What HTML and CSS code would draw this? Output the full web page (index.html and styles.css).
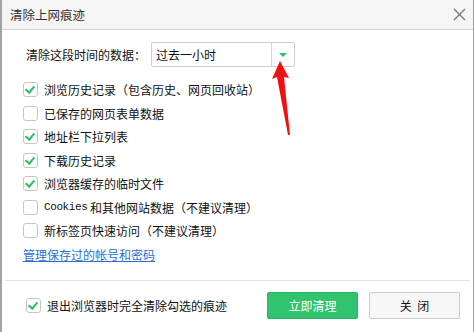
FILE: index.html
```html
<!DOCTYPE html>
<html lang="zh-CN">
<head>
    <meta charset="UTF-8">
    <title>清除上网痕迹</title>
    <link rel="stylesheet" href="styles.css">
</head>
<body>
    <div class="dialog">
        <div class="title-bar">
            <span class="title">清除上网痕迹</span>
            <span class="close-btn">
                <svg width="13" height="13" viewBox="0 0 13 13">
                    <path d="M1 1 L12 12 M12 1 L1 12" stroke="#777" stroke-width="1.3" fill="none"/>
                </svg>
            </span>
        </div>

        <div class="content">
            <div class="time-row">
                <span class="time-label">清除这段时间的数据：</span>
                <div class="select">
                    <span class="select-value">过去一小时</span>
                    <span class="select-arrow"><i class="triangle"></i></span>
                </div>
            </div>

            <ul class="options">
                <li class="option"><span class="checkbox checked"></span>浏览历史记录（包含历史、网页回收站）</li>
                <li class="option"><span class="checkbox"></span>已保存的网页表单数据</li>
                <li class="option"><span class="checkbox checked"></span>地址栏下拉列表</li>
                <li class="option"><span class="checkbox checked"></span>下载历史记录</li>
                <li class="option"><span class="checkbox checked"></span>浏览器缓存的临时文件</li>
                <li class="option"><span class="checkbox"></span><span class="latin">Cookies</span>&nbsp;和其他网站数据（不建议清理）</li>
                <li class="option"><span class="checkbox"></span>新标签页快速访问（不建议清理）</li>
            </ul>

            <a class="manage-link" href="#">管理保存过的帐号和密码</a>
        </div>

        <div class="footer">
            <label class="exit-option"><span class="checkbox checked"></span>退出浏览器时完全清除勾选的痕迹</label>
            <div class="buttons">
                <button class="btn btn-primary">立即清理</button>
                <button class="btn btn-default">关&nbsp;&nbsp;闭</button>
            </div>
        </div>

        <!-- 标注箭头 -->
        <svg class="annotation" width="30" height="80" viewBox="0 0 30 80">
            <polygon points="9,0 1,18 6,16 17,74 19,74 13,16 18,17" fill="#f01010"/>
        </svg>
    </div>
</body>
</html>
```

FILE: styles.css
```css
* {
    margin: 0;
    padding: 0;
    box-sizing: border-box;
}

body {
    font-family: "Noto Sans CJK SC", "Liberation Sans", sans-serif;
    font-size: 12px;
    color: #111;
    background: white;
}

.dialog {
    position: relative;
    width: 474px;
    height: 332px;
    border-left: 2px solid #a3a3a3;
    border-right: 1px solid #a3a3a3;
    display: flex;
    flex-direction: column;
}

.title-bar {
    height: 30px;
    background: #f5f5f5;
    border-bottom: 1px solid #d6d6d6;
    display: flex;
    align-items: center;
    justify-content: space-between;
    padding: 0 6px 0 8px;
}

.title {
    font-size: 12.5px;
    color: #333;
}

.close-btn {
    display: flex;
    width: 16px;
    height: 16px;
    align-items: center;
    justify-content: center;
}

.content {
    padding: 12px 0 0 21px;
    flex: 1;
}

.time-row {
    display: flex;
    align-items: center;
    height: 25px;
}

.time-label {
    padding-left: 3px;
    width: 128px;
}

.select {
    width: 144px;
    height: 25px;
    border: 1px solid #c9ced3;
    border-radius: 2px;
    display: flex;
    align-items: center;
}

.select-value {
    flex: 1;
    padding-left: 4px;
}

.select-arrow {
    width: 23px;
    height: 100%;
    border-left: 1px solid #d3d7db;
    display: flex;
    align-items: center;
    justify-content: center;
}

.triangle {
    width: 0;
    height: 0;
    border-left: 4px solid transparent;
    border-right: 4px solid transparent;
    border-top: 4px solid #2cbf63;
}

.options {
    list-style: none;
    margin-top: 11px;
}

.option {
    height: 23.5px;
    display: flex;
    align-items: center;
}

.checkbox {
    width: 15px;
    height: 15px;
    border: 1px solid #c6c6c6;
    border-radius: 3px;
    background: white;
    margin-right: 6px;
    position: relative;
    flex-shrink: 0;
}

.checkbox.checked::after {
    content: "";
    position: absolute;
    left: 3px;
    top: 1px;
    width: 4px;
    height: 7px;
    border-right: 2px solid #2cbf63;
    border-bottom: 2px solid #2cbf63;
    transform: rotate(40deg);
}

.latin {
    font-family: "Liberation Mono", monospace;
    font-size: 11px;
    letter-spacing: -0.4px;
}

.manage-link {
    display: inline-block;
    margin-top: 4px;
    color: #2a6fd1;
    text-decoration: underline;
    line-height: 16px;
}

.footer {
    margin: 0 3px 0 3px;
    border-top: 1px solid #e3e3e3;
    height: 52px;
    display: flex;
    align-items: center;
    justify-content: space-between;
    padding: 0 10px 2px 21px;
}

.exit-option {
    display: flex;
    align-items: center;
}

.buttons {
    display: flex;
    gap: 11px;
}

.btn {
    width: 91px;
    height: 27px;
    font-family: inherit;
    font-size: 12px;
    border-radius: 2px;
    cursor: pointer;
}

.btn-primary {
    background: #2fc46d;
    border: 1px solid #27b460;
    color: white;
}

.btn-default {
    background: #f7f7f7;
    border: 1px solid #cccccc;
    color: #111;
}

.annotation {
    position: absolute;
    left: 269px;
    top: 61px;
}
```
